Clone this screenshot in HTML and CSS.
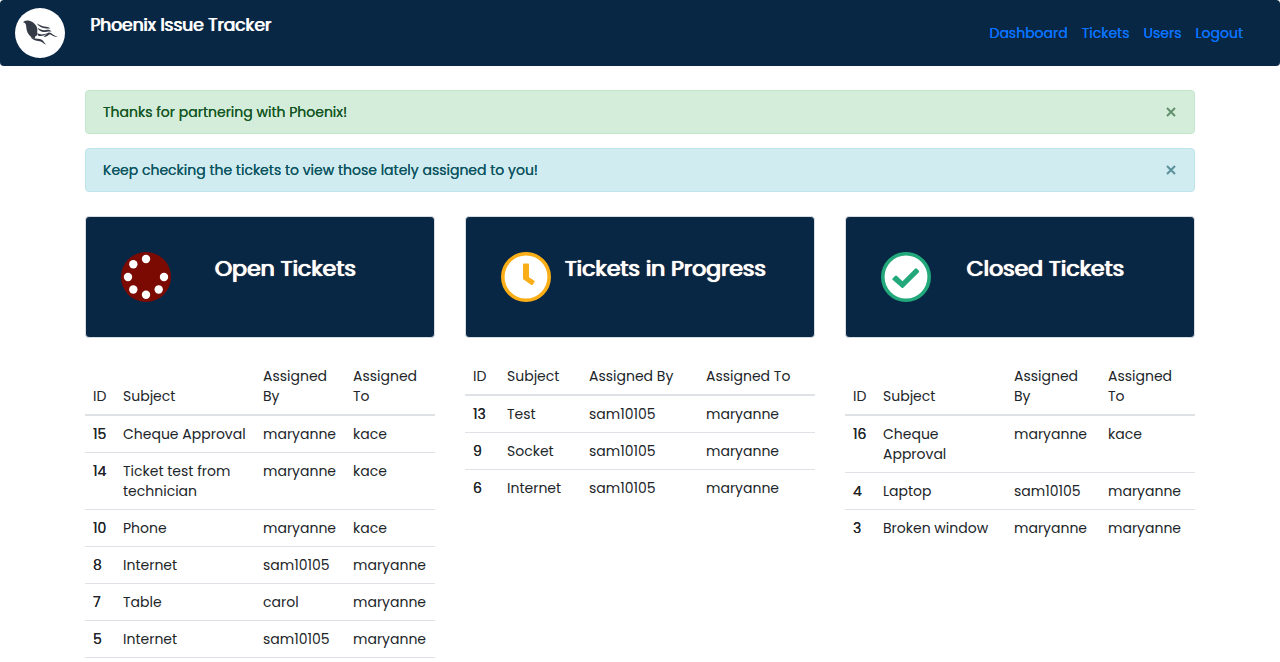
FILE: index.html
```html
<!DOCTYPE html>
<html lang="en">
<head>
<meta charset="utf-8">
<meta name="viewport" content="width=device-width, initial-scale=1">
<title>Phoenix Issue Tracker</title>
<link rel="stylesheet" href="styles.css">
</head>
<body>
<header class="navbar">
  <svg class="logo" viewBox="0 0 50 50" role="img" aria-label="Phoenix">
    <circle cx="25" cy="25" r="25" fill="#fff"/>
    <g fill="#343a46">
      <path d="M8 14.600C9 12.800 11 12.200 13.500 12.600C17 13.300 19 15.200 21 17.600C22.300 19.600 22.600 22 22.200 24.500C22.800 26.500 22.300 28 20.500 28L19.500 31C15 29 12.300 25.500 11.700 22C11.300 19.500 11.300 16.800 10.300 15.400C9.700 14.700 8.800 14.400 8 14.600Z"/>
      <path d="M22 15.500C24.500 17.200 26.500 17.700 29 18.500C31.500 19.200 33.500 18.600 35.500 20.600C32.500 20.300 30.500 20.700 27.500 19.800C25 19 23 17.500 22 15.500Z"/>
      <path d="M22.500 19.800C25.500 22 28.500 22.600 31 22C33 21.600 35.300 21.700 36.500 23.700C34 23 32 24 29 24C26 24 23.500 22.500 22.500 19.800Z"/>
      <path d="M27.500 28.600C30.500 28.500 31.300 25 34 24.500C36.500 24.200 37.500 27.500 42.500 28.500C40 29.400 37.500 27.800 35.500 26.600C33.500 25.500 33 29.600 27.500 28.600Z"/>
      <path d="M22.500 25.300C25.500 27 29 26.500 32.500 25.300C30 27.600 26 28.800 23 27.500Z"/>
      <path d="M15.500 28.800C18.500 31 21.500 30.500 25 31C28.500 31.800 28.700 34.700 31.200 36.500C28 35.600 27.500 33.500 24.500 33.200C21 32.800 17.500 32.300 15.500 28.800Z"/>
    </g>
  </svg>
  <h1 class="brand">Phoenix Issue Tracker</h1>
  <nav class="nav-links" aria-label="Main">
    <a href="#dashboard">Dashboard</a>
    <a href="#tickets">Tickets</a>
    <a href="#users">Users</a>
    <a href="#logout">Logout</a>
  </nav>
</header>
<main class="container">
  <div class="alerts">
    <div class="alert alert-success" role="alert">
      <span>Thanks for partnering with Phoenix!</span>
      <button class="close" type="button" aria-label="Close"><svg viewBox="0 0 10 10"><path d="M1 1L9 9M9 1L1 9"/></svg></button>
    </div>
    <div class="alert alert-info" role="alert">
      <span>Keep checking the tickets to view those lately assigned to you!</span>
      <button class="close" type="button" aria-label="Close"><svg viewBox="0 0 10 10"><path d="M1 1L9 9M9 1L1 9"/></svg></button>
    </div>
  </div>
  <div class="board">
    <section class="column">
      <div class="card">
        <svg class="card-icon" viewBox="0 0 50 50" aria-hidden="true">
          <circle cx="25" cy="25" r="25" fill="#7b0a02"/>
          <g fill="#fff"><circle cx="25" cy="7" r="4.200"/><circle cx="12.300" cy="12.300" r="4.200"/><circle cx="7" cy="25" r="4.200"/><circle cx="12.300" cy="37.500" r="4.200"/><circle cx="25" cy="42.800" r="4.200"/><circle cx="37.700" cy="37.500" r="4.200"/><circle cx="43" cy="25" r="4.200"/></g>
        </svg>
        <h2 class="card-title">Open Tickets</h2>
      </div>
      <table class="tickets tickets-open">
        <colgroup><col class="col-id"><col class="col-subject"><col class="col-by"><col class="col-to"></colgroup>
        <thead><tr><th scope="col">ID</th><th scope="col">Subject</th><th scope="col">Assigned By</th><th scope="col">Assigned To</th></tr></thead>
        <tbody>
          <tr><th scope="row">15</th><td>Cheque Approval</td><td>maryanne</td><td>kace</td></tr>
          <tr><th scope="row">14</th><td>Ticket test from technician</td><td>maryanne</td><td>kace</td></tr>
          <tr><th scope="row">10</th><td>Phone</td><td>maryanne</td><td>kace</td></tr>
          <tr><th scope="row">8</th><td>Internet</td><td>sam10105</td><td>maryanne</td></tr>
          <tr><th scope="row">7</th><td>Table</td><td>carol</td><td>maryanne</td></tr>
          <tr><th scope="row">5</th><td>Internet</td><td>sam10105</td><td>maryanne</td></tr>
        </tbody>
      </table>
    </section>
    <section class="column">
      <div class="card">
        <svg class="card-icon" viewBox="0 0 50 50" aria-hidden="true">
          <circle cx="25" cy="25" r="23.200" fill="#fff" stroke="#f9ae17" stroke-width="3.600"/>
          <path d="M22 12.500Q22 11.500 23 11.500H27Q28 11.500 28 12.500V25.200L33.300 28.800Q34 29.300 33.500 30L31.700 32.700Q31.200 33.400 30.400 32.900L22.600 27.600Q22 27.200 22 26.400Z" fill="#f9ae17"/>
        </svg>
        <h2 class="card-title">Tickets in Progress</h2>
      </div>
      <table class="tickets tickets-progress">
        <colgroup><col class="col-id"><col class="col-subject"><col class="col-by"><col class="col-to"></colgroup>
        <thead><tr><th scope="col">ID</th><th scope="col">Subject</th><th scope="col">Assigned By</th><th scope="col">Assigned To</th></tr></thead>
        <tbody>
          <tr><th scope="row">13</th><td>Test</td><td>sam10105</td><td>maryanne</td></tr>
          <tr><th scope="row">9</th><td>Socket</td><td>sam10105</td><td>maryanne</td></tr>
          <tr><th scope="row">6</th><td>Internet</td><td>sam10105</td><td>maryanne</td></tr>
        </tbody>
      </table>
    </section>
    <section class="column">
      <div class="card">
        <svg class="card-icon" viewBox="0 0 50 50" aria-hidden="true">
          <circle cx="25" cy="25" r="23.200" fill="#fff" stroke="#22a87a" stroke-width="3.600"/>
          <path d="M11.500 26.500L14 24Q15 23 16 24L21.500 29.200L34 16.700Q35 15.700 36 16.700L37.700 18.400Q38.700 19.400 37.700 20.400L22.500 35.600Q21.500 36.600 20.500 35.600L11.500 27.700Q10.900 27.100 11.500 26.500Z" fill="#22a87a"/>
        </svg>
        <h2 class="card-title">Closed Tickets</h2>
      </div>
      <table class="tickets tickets-closed">
        <colgroup><col class="col-id"><col class="col-subject"><col class="col-by"><col class="col-to"></colgroup>
        <thead><tr><th scope="col">ID</th><th scope="col">Subject</th><th scope="col">Assigned By</th><th scope="col">Assigned To</th></tr></thead>
        <tbody>
          <tr><th scope="row">16</th><td>Cheque Approval</td><td>maryanne</td><td>kace</td></tr>
          <tr><th scope="row">4</th><td>Laptop</td><td>sam10105</td><td>maryanne</td></tr>
          <tr><th scope="row">3</th><td>Broken window</td><td>maryanne</td><td>maryanne</td></tr>
        </tbody>
      </table>
    </section>
  </div>
</main>
</body>
</html>
```
FILE: styles.css
```css
* {
  box-sizing: border-box;
}

body {
  margin: 0;
  background: #fff;
  color: #212529;
  font-family: Poppins, Inter, "Open Sans", sans-serif;
  font-size: 14px;
  line-height: 20px;
}

.navbar {
  display: flex;
  align-items: center;
  padding: 8px 37px 8px 15px;
  border-radius: 4px;
  background: #082744;
}

.logo {
  width: 50px;
  height: 50px;
}

.brand {
  align-self: flex-start;
  margin: 4px 0 0 25px;
  color: #fff;
  font-size: 17px;
  font-weight: 400;
  line-height: 26px;
  text-shadow: 1px 0 0 currentColor;
}

.nav-links {
  display: flex;
  gap: 14px;
  margin-left: auto;
}

.nav-links a {
  color: #0a74ff;
  text-decoration: none;
  text-shadow: 0 0 0 currentColor;
}

.container {
  max-width: 1140px;
  margin: 0 auto;
  padding: 24px 15px 0;
}

.alerts {
  display: grid;
  gap: 14px;
}

.alert {
  display: flex;
  align-items: center;
  justify-content: space-between;
  padding: 11px 17px;
  border: 1px solid;
  border-radius: 4px;
  text-shadow: 0 0 0 currentColor;
}

.alert-success {
  border-color: #c3e6cb;
  background: #d4edda;
  color: #155724;
}

.alert-info {
  border-color: #bee5eb;
  background: #d1ecf1;
  color: #0c5460;
}

.close {
  display: flex;
  padding: 0;
  border: 0;
  background: none;
  color: inherit;
  opacity: 0.6;
  cursor: pointer;
}

.close svg {
  width: 12px;
  height: 10px;
  fill: none;
  stroke: currentColor;
  stroke-width: 2;
}

.board {
  display: grid;
  grid-template-columns: repeat(3, minmax(0, 1fr));
  gap: 30px;
  margin-top: 24px;
}

.card {
  display: flex;
  align-items: center;
  padding: 35px;
  border: 1px solid #d6dce2;
  border-radius: 4px;
  background: #082744;
}

.card-icon {
  flex: none;
  width: 50px;
  height: 50px;
}

.card-title {
  flex: 1;
  align-self: flex-start;
  margin: 4px 0 0;
  color: #fff;
  font-size: 22px;
  font-weight: 400;
  line-height: 26px;
  text-align: center;
  text-shadow: 0 0 1px currentColor, 1px 0 0 currentColor;
  white-space: nowrap;
}

.tickets {
  width: 100%;
  margin-top: 20px;
  border-collapse: collapse;
  table-layout: fixed;
}

.tickets th,
.tickets td {
  padding: 8px 0 8px 8px;
  border-top: 1px solid #dee2e6;
  font-weight: 400;
  text-align: left;
  vertical-align: top;
}

.tickets thead th {
  padding-right: 8px;
  border-top: 0;
  border-bottom: 2px solid #dee2e6;
  vertical-align: bottom;
}

.tickets tbody th {
  text-shadow: 0 0 0 currentColor;
}

.tickets-open {
  border-bottom: 1px solid #dee2e6;
}

.tickets .col-id {
  width: 30px;
}

.tickets .col-by,
.tickets .col-to {
  width: 90px;
}

.tickets-progress .col-id {
  width: 34px;
}

.tickets-progress .col-subject {
  width: 82px;
}

.tickets-progress .col-by,
.tickets-progress .col-to {
  width: auto;
}

.tickets-closed td {
  padding-right: 8px;
}

.tickets-closed .col-by {
  width: 94px;
}

.tickets-closed .col-to {
  width: 95px;
}
```
